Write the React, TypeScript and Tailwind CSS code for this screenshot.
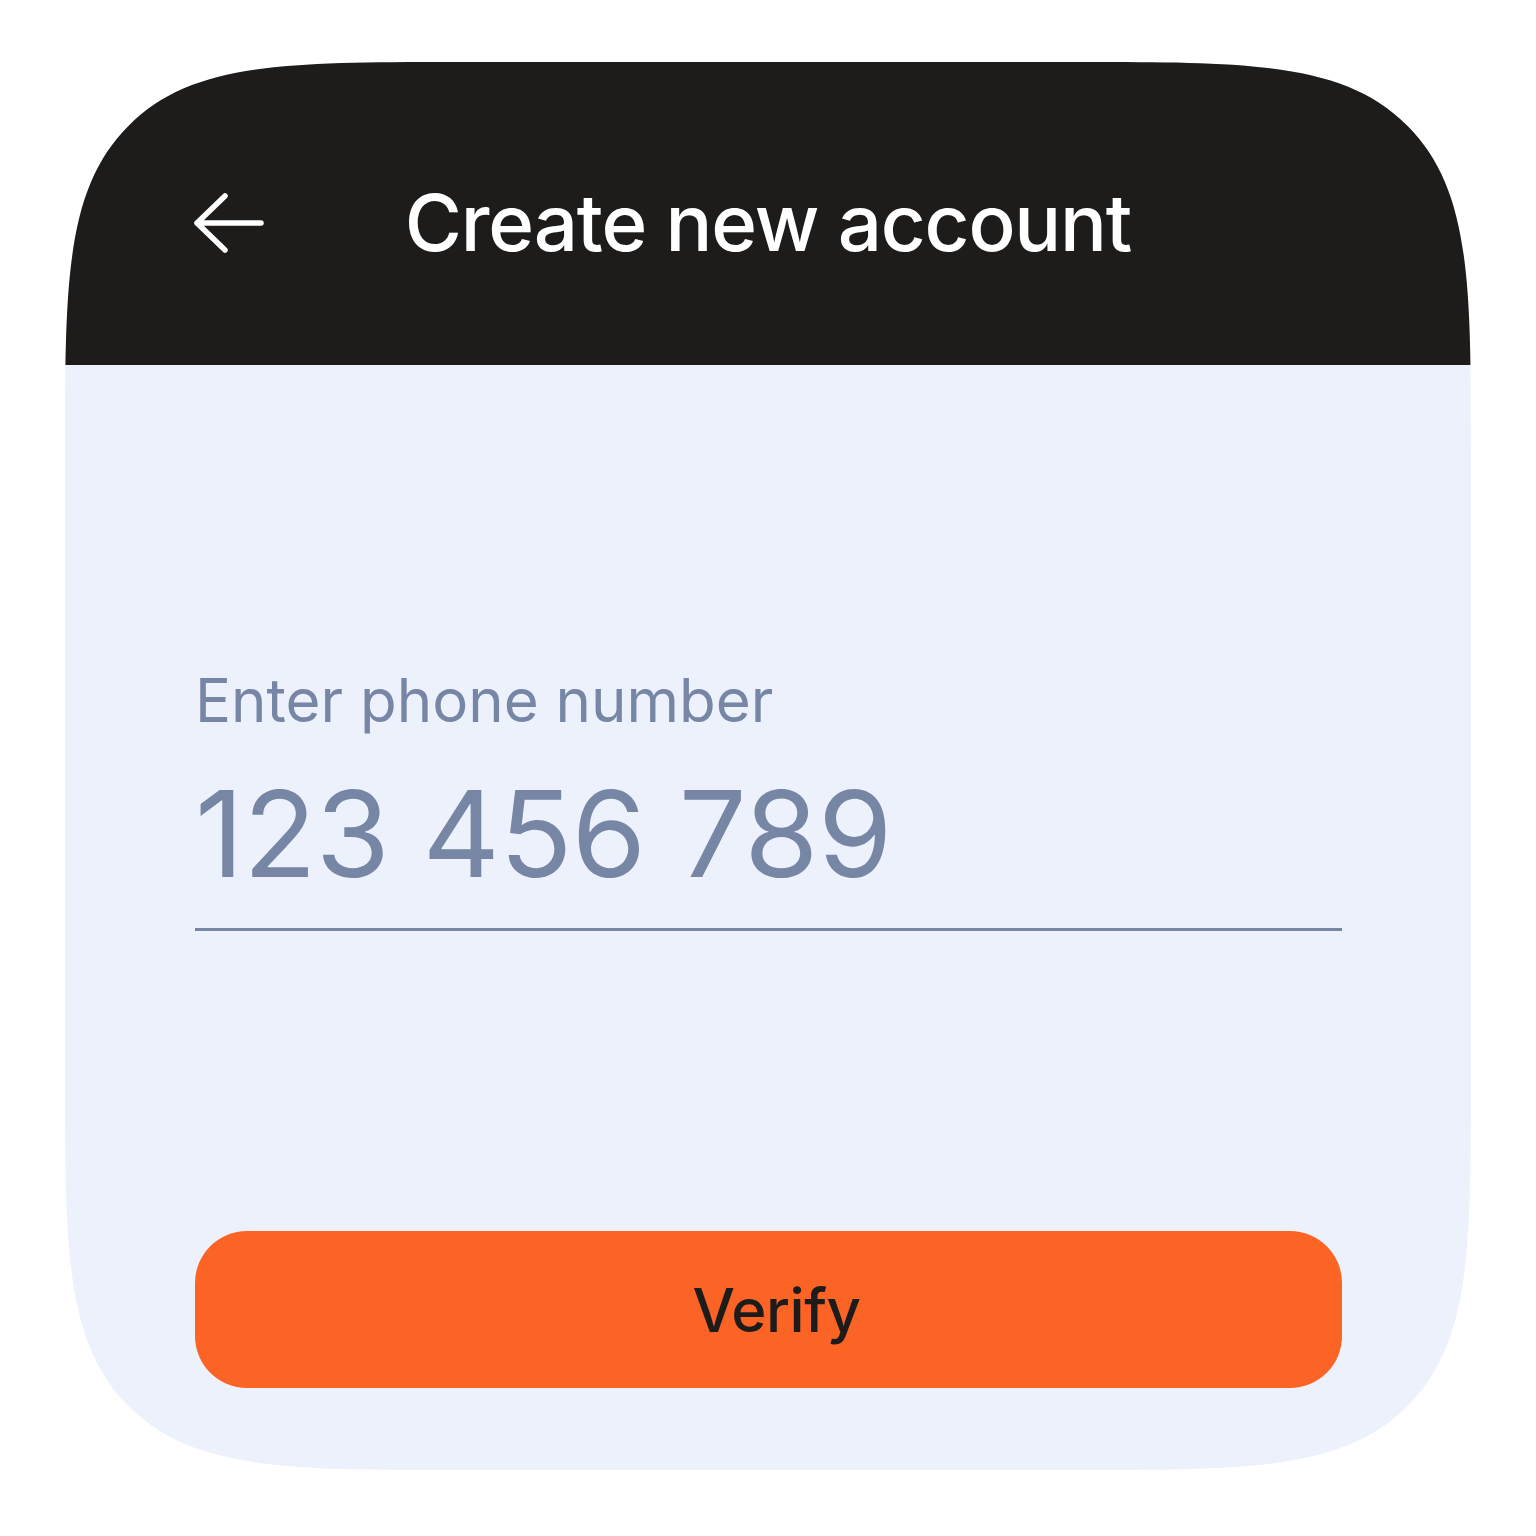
const BackArrow = () => (
  <svg width="72" height="62" viewBox="-4 -4 72 62" fill="none" className="block">
    <path
      d="M64 27H0M28 0L0 27L28 54"
      stroke="white"
      strokeWidth="5.5"
      strokeLinecap="round"
      strokeLinejoin="round"
    />
  </svg>
);

const App = () => {
  return (
    <div className="min-h-[1536px] w-[1536px] bg-white pt-[62px] pl-[65px] font-['Inter','Liberation_Sans',sans-serif]">
      <div className="flex h-[1408px] w-[1406px] flex-col overflow-hidden rounded-[400px] bg-[#edf1fc] [corner-shape:squircle]">
        {/* HEADER */}
        <div className="grid h-[303px] shrink-0 grid-cols-[1fr_auto_1fr] items-center bg-[#1d1c1a] px-[128px] pt-[18px]">
          <div className="flex items-center">
            <BackArrow />
          </div>
          <h1 className="text-[78px] leading-none font-medium tracking-[-1.2px] text-white">
            Create new account
          </h1>
          <div />
        </div>

        {/* PHONE FIELD */}
        <div className="flex flex-1 flex-col pt-[305px] pr-[129px] pb-[82px] pl-[130px]">
          <label className="text-[60px] leading-none text-[#7686a4]">
            Enter phone number
          </label>
          <div className="mt-[44px] border-b-[3px] border-[#7686a4] pb-[34px]">
            <span className="text-[120px] leading-none tracking-[-0.6px] text-[#7686a4]">
              123 456 789
            </span>
          </div>

          {/* VERIFY */}
          <button className="mt-auto flex h-[157px] w-full items-center justify-center rounded-[52px] bg-[#fb6424] pl-[16px] text-[60px] font-medium tracking-[-0.5px] text-[#1d1c1a]">
            Verify
          </button>
        </div>
      </div>
    </div>
  );
};

export default App;
